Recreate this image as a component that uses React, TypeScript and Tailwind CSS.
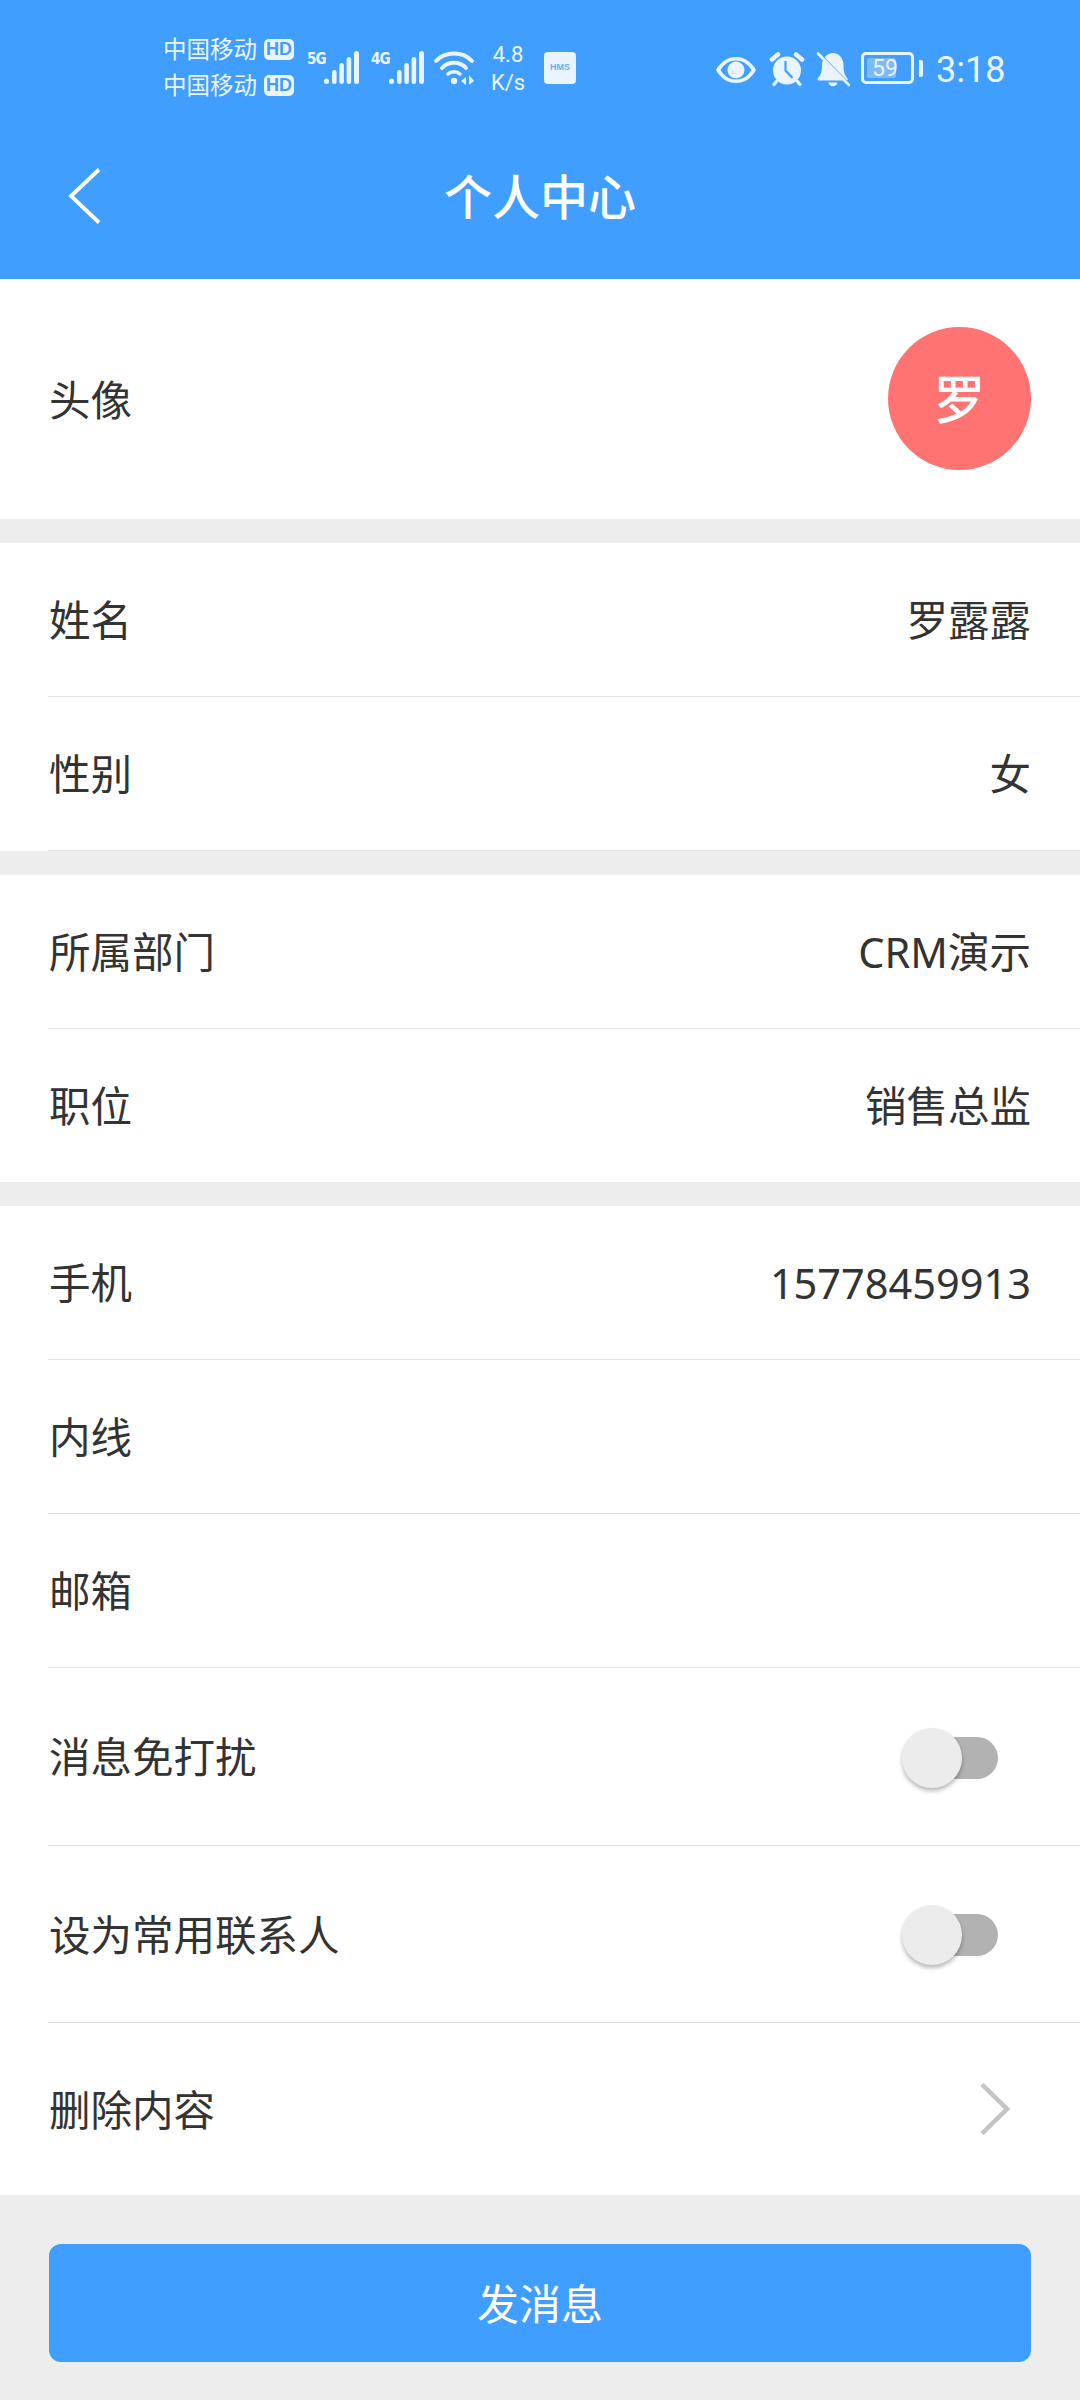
import React from "react";

const cjk = { fontFamily: '"Noto Sans", "Noto Sans CJK SC", sans-serif' };

function SignalBars() {
  return (
    <svg width="35" height="33" viewBox="0 0 35 33" className="block shrink-0" fill="#eaf4ff">
      <rect x="0" y="27.5" width="5" height="5.5" rx="2.5" />
      <rect x="8" y="19" width="4.6" height="14" rx="2.3" />
      <rect x="15.3" y="12" width="4.6" height="21" rx="2.3" />
      <rect x="22.6" y="6" width="4.6" height="27" rx="2.3" />
      <rect x="30" y="0" width="5" height="33" rx="2.5" />
    </svg>
  );
}

function Wifi() {
  return (
    <svg width="42" height="36" viewBox="0 0 42 36" className="block shrink-0" fill="none" stroke="#eaf4ff" strokeLinecap="round">
      <path d="M2 11 C11 1 29 1 38 11" strokeWidth="4" />
      <path d="M8 18 C14 11 26 11 32 18" strokeWidth="4" />
      <path d="M14 24 C17 21 23 21 26 24" strokeWidth="3.5" />
      <circle cx="20" cy="31" r="3.2" fill="#eaf4ff" stroke="none" />
      <path d="M32 27 L27 31 L32 35 Z" fill="#eaf4ff" stroke="none" />
      <path d="M35 25 L35 35 L40 31 Z" fill="#eaf4ff" stroke="none" />
    </svg>
  );
}

function Eye() {
  return (
    <svg width="42" height="26" viewBox="0 0 42 26" className="block shrink-0">
      <path fillRule="evenodd" fill="#eaf4ff" d="M1 13 C6 4 13 0 21 0 C29 0 36 4 41 13 C36 22 29 26 21 26 C13 26 6 22 1 13 Z M5.5 13 C9.5 19.5 15 22.5 21 22.5 C27 22.5 32.5 19.5 36.5 13 C32.5 6.5 27 3.5 21 3.5 C15 3.5 9.5 6.5 5.5 13 Z" />
      <path fillRule="evenodd" fill="#eaf4ff" d="M21 4.5 A8.5 8.5 0 1 1 20.99 4.5 Z M17 13 A4 4 0 0 0 21 17 A5 5 0 0 1 17 13 Z" />
    </svg>
  );
}

function Alarm() {
  return (
    <svg width="36" height="35" viewBox="0 0 36 35" className="block shrink-0">
      <circle cx="18" cy="18.5" r="14" fill="#eaf4ff" />
      <path d="M3 7.5 L9 2.5" stroke="#eaf4ff" strokeWidth="4.5" strokeLinecap="round" />
      <path d="M33 7.5 L27 2.5" stroke="#eaf4ff" strokeWidth="4.5" strokeLinecap="round" />
      <path d="M7.5 29.5 L5 32.5 M28.5 29.5 L31 32.5" stroke="#eaf4ff" strokeWidth="3.4" strokeLinecap="round" />
      <path d="M16.5 9 L16.5 18.5 L23.5 26" fill="none" stroke="#409eff" strokeWidth="2.2" />
    </svg>
  );
}

function BellOff() {
  return (
    <svg width="34" height="36" viewBox="0 0 34 36" className="block shrink-0">
      <path fill="#eaf4ff" d="M17 1 C23 1 27.5 6.5 27.5 13 C27.5 19 28.5 23.5 31.5 26.5 C32 27.5 31.5 28.5 30.5 28.5 L3 28.5 C1.5 28.5 1 27 2 26 C5 23 6 19 6 13 C6 6.5 11 1 17 1 Z" />
      <path fill="#eaf4ff" d="M12.5 30.5 L21.5 30.5 C21 35.5 13 35.5 12.5 30.5 Z" />
      <path d="M-1 2 L31 35" stroke="#409eff" strokeWidth="3" transform="translate(2.2 -2.2)" />
      <path d="M2 1.5 L33 33" stroke="#eaf4ff" strokeWidth="2.6" strokeLinecap="round" />
    </svg>
  );
}

function Row({
  label,
  children,
  h = "h-[154px]",
  border = true,
}: {
  label: string;
  children?: React.ReactNode;
  h?: string;
  border?: boolean;
}) {
  return (
    <div className="ml-[48px]">
      <div className={`flex items-center justify-between pr-[49px] ${h} ${border ? "border-b border-[#e2e2e2]" : ""}`}>
        <span className="text-[41.5px] leading-none text-[#333333] mt-[3px] ml-[1px]">{label}</span>
        {children}
      </div>
    </div>
  );
}

function Value({ children }: { children: React.ReactNode }) {
  return <span className="text-[41.5px] leading-none text-[#333333] mt-[3px]">{children}</span>;
}

function Toggle() {
  return (
    <div className="flex items-center mr-[33px] w-[96px] h-[60px] mt-[2px]">
      <div className="w-[60px] h-[60px] rounded-full bg-[#ececec] shadow-[0_3px_4px_rgba(0,0,0,0.28)] z-10 shrink-0" />
      <div className="h-[42px] w-[56px] ml-[-20px] rounded-r-full bg-[#b2b2b2] shrink-0" />
    </div>
  );
}

export default function App() {
  return (
    <div className="w-[1080px] h-[2400px] bg-[#ededed] flex flex-col overflow-hidden" style={cjk}>
      <header className="h-[279px] bg-[#409eff] flex flex-col shrink-0">
        <div className="h-[112px] flex items-start pl-[163px] pt-[36px] text-[#eaf4ff]">
          <div className="flex flex-col gap-[14px] shrink-0 w-[131px] mt-[2px]">
            {[0, 1].map((i) => (
              <div key={i} className="flex items-center h-[22px]">
                <span className="text-[23.5px] leading-none w-[101px] whitespace-nowrap" style={{ fontFamily: '"Noto Sans CJK SC", sans-serif' }}>中国移动</span>
                <span className="w-[30px] h-[21px] rounded-[5px] bg-[#eaf4ff] text-[#409eff] text-[18px] font-bold leading-[21px] text-center" style={{ fontFamily: '"Liberation Sans", sans-serif' }}>HD</span>
              </div>
            ))}
          </div>
          <div className="flex items-end ml-[13px] mt-[15px] h-[33px]">
            <span className="text-[15px] font-bold leading-none mb-[17px] w-[17px] tracking-[-1px]" style={{ fontFamily: '"DejaVu Sans Condensed", "Liberation Sans", sans-serif' }}>5G</span>
            <SignalBars />
            <span className="text-[15px] font-bold leading-none mb-[17px] w-[18px] ml-[12px] tracking-[-1px]" style={{ fontFamily: '"DejaVu Sans Condensed", "Liberation Sans", sans-serif' }}>4G</span>
            <SignalBars />
          </div>
          <div className="ml-[10px] mt-[14px]"><Wifi /></div>
          <div className="ml-[13px] mt-[5px] w-[38px] flex flex-col items-center text-[22px] leading-[28px] shrink-0" style={{ fontFamily: 'Roboto, sans-serif' }}>
            <span>4.8</span>
            <span>K/s</span>
          </div>
          <div className="ml-[17px] mt-[16px] w-[32px] h-[32px] rounded-[4px] bg-[#eaf4ff] text-[#68aef5] text-[9px] font-bold flex items-center justify-center shrink-0" style={{ fontFamily: '"Liberation Sans", sans-serif' }}>HMS</div>
          <div className="ml-[139px] mt-[21px]"><Eye /></div>
          <div className="ml-[12px] mt-[16px]"><Alarm /></div>
          <div className="ml-[11px] mt-[16px]"><BellOff /></div>
          <div className="ml-[11px] mt-[16px] flex items-center shrink-0">
            <div className="relative w-[53px] h-[32px] rounded-[5px] border-[3px] border-[#eaf4ff] p-[3px]">
              <div className="h-full w-[29px] rounded-[2px] bg-[#7fb9f6]" />
              <span className="absolute inset-0 flex items-center justify-center text-[23px] leading-none mr-[5px]" style={{ fontFamily: 'Roboto, sans-serif' }}>59</span>
            </div>
            <div className="w-[4px] h-[17px] ml-[5px] rounded-r-[2px] bg-[#eaf4ff]" />
          </div>
          <span className="ml-[13px] mt-[12px] text-[36px] leading-[44px] shrink-0" style={{ fontFamily: 'Roboto, sans-serif' }}>3:18</span>
        </div>
        <div className="flex-1 flex items-center">
          <div className="w-[160px] pl-[66px] shrink-0">
            <svg width="36" height="56" viewBox="0 0 36 56" className="block" fill="none" stroke="#ffffff" strokeWidth="3.8">
              <path d="M33 1.5 L5 28 L33 54.5" />
            </svg>
          </div>
          <h1 className="flex-1 text-center text-[48px] leading-none text-white font-medium mt-[3px]">个人中心</h1>
          <div className="w-[160px] shrink-0" />
        </div>
      </header>

      <main className="flex-col flex shrink-0">
        <section className="bg-white">
          <Row label="头像" h="h-[240px]" border={false}>
            <div className="w-[143px] h-[143px] mb-[1px] rounded-full bg-[#ff7373] flex items-center justify-center text-white text-[52px] font-medium leading-none">罗</div>
          </Row>
        </section>

        <section className="bg-white mt-[24px]">
          <Row label="姓名"><Value>罗露露</Value></Row>
          <Row label="性别"><Value>女</Value></Row>
        </section>

        <section className="bg-white mt-[24px]">
          <Row label="所属部门"><Value>CRM演示</Value></Row>
          <Row label="职位" border={false} h="h-[153px]"><Value>销售总监</Value></Row>
        </section>

        <section className="bg-white mt-[24px]">
          <Row label="手机"><Value>15778459913</Value></Row>
          <Row label="内线" />
          <Row label="邮箱" />
          <Row label="消息免打扰" h="h-[178px]"><Toggle /></Row>
          <Row label="设为常用联系人" h="h-[177px]"><Toggle /></Row>
          <Row label="删除内容" h="h-[172px]" border={false}>
            <svg width="30" height="52" viewBox="0 0 30 52" className="block mr-[21px]" fill="none" stroke="#c4c4c4" strokeWidth="4.5">
              <path d="M2 1.5 L27 26 L2 50.5" />
            </svg>
          </Row>
        </section>
      </main>

      <div className="mt-[49px] mx-[49px] h-[118px] pt-[2px] rounded-[12px] bg-[#409eff] flex items-center justify-center text-white text-[42px] leading-none shrink-0">发消息</div>
    </div>
  );
}
